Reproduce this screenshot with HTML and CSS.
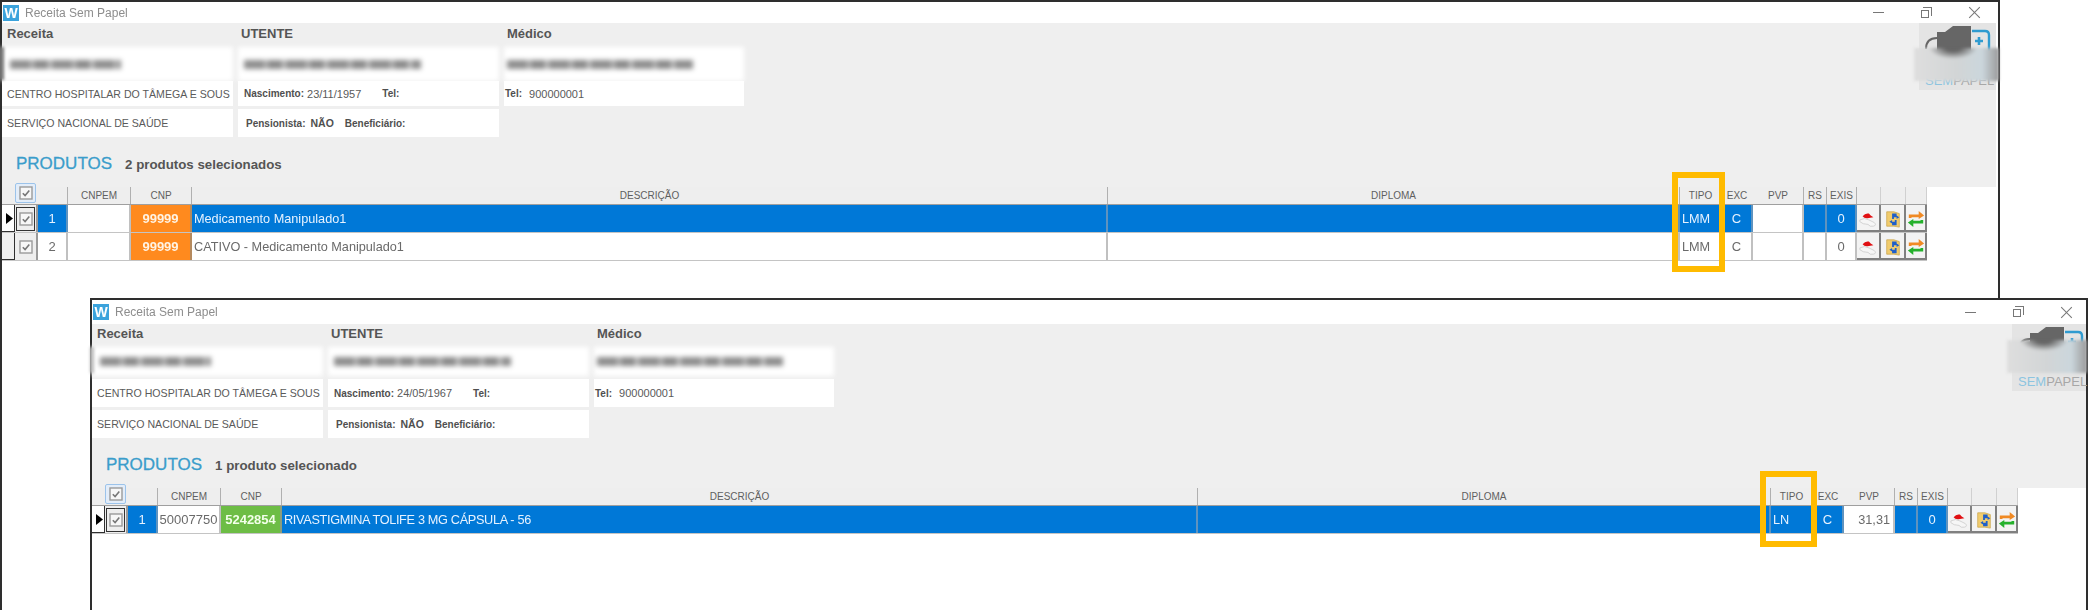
FILE: index.html
```html
<!DOCTYPE html>
<html lang="pt">
<head>
<meta charset="utf-8">
<title>Receita Sem Papel</title>
<link rel="stylesheet" href="styles.css">
</head>
<body>
<svg class="defs" aria-hidden="true">
  <symbol id="i-check" viewBox="0 0 14 14">
    <rect x="1" y="1" width="12" height="12" fill="#f7f7f7" stroke="#9a9a9a" stroke-width="1.4"/>
    <path d="M3.8 7.2l2.3 2.4 4.2-5" fill="none" stroke="#777" stroke-width="1.6"/>
  </symbol>
  <symbol id="i-arrow" viewBox="0 0 7 11"><path d="M0 0l7 5.5L0 11z" fill="#000"/></symbol>
  <symbol id="i-cap" viewBox="0 0 20 20">
    <path d="M1 11q5-3 10 0l6 3q3 3-1 4-4 1-6-2-6 0-9-3z" fill="#f6f6f6" stroke="#cfcfcf"/>
    <path d="M4 7q3-4 7-3l2 2 3 2-5 1q-5 1-7-2z" fill="#e00f12"/>
  </symbol>
  <symbol id="i-folder" viewBox="0 0 20 20">
    <path d="M3 2h8l6 2v15l-6-1H3z" fill="#f1cc6d" stroke="#c9a44a" stroke-width=".8"/>
    <path d="M9 4h5v2l3 2-3 2V8h-3v2H9zM13 17H9v-2l-3-2 3-2v2h3v-2h2v6z" fill="#1f5fc9"/>
  </symbol>
  <symbol id="i-swap" viewBox="0 0 20 20">
    <path d="M2 9V5h11V1l6 5-6 4V8H5v1z" fill="#f08a24"/>
    <path d="M18 11v4H7v4l-6-5 6-4v2h8v-1z" fill="#25b12c"/>
  </symbol>
  <symbol id="i-logo" viewBox="0 0 77 46">
    <path d="M7 26c0-7 4-11 11-11" fill="none" stroke="#666" stroke-width="2"/>
    <path d="M18 9h8l8-6h18v28H18z" fill="#666"/>
    <path d="M53 8h13q4 0 4 4v20" fill="none" stroke="#2f9bd0" stroke-width="2.4"/>
    <path d="M60 14v8M56 18h8" stroke="#2f9bd0" stroke-width="2.6"/>
  </symbol>
</svg>

<main class="desktop">
  <section class="window window--back">
    <header class="titlebar">
      <span class="app-icon">W</span>
      <span class="app-title">Receita Sem Papel</span>
      <div class="controls">
        <span class="control"><span class="ctl-min"></span></span>
        <span class="control"><span class="ctl-restore"></span></span>
        <span class="control"><span class="ctl-close"></span></span>
      </div>
    </header>

    <div class="panel">
      <div class="info">
        <div class="info-grid">
          <h2 class="heading">Receita</h2>
          <h2 class="heading">UTENTE</h2>
          <h2 class="heading">Médico</h2>
          <div class="card card--blurred"><span class="redact redact--a"></span></div>
          <div class="card card--blurred"><span class="redact redact--b"></span></div>
          <div class="card card--blurred"><span class="redact redact--c"></span></div>
          <div class="card card--r2 card--plain">CENTRO HOSPITALAR DO TÂMEGA E SOUS</div>
          <div class="card card--r2 card--mid"><b>Nascimento:</b><span class="val">23/11/1957</span><b class="after-date">Tel:</b></div>
          <div class="card card--r2 card--tight"><b>Tel:</b><span class="val val--wide">900000001</span></div>
          <div class="card card--r3 card--plain">SERVIÇO NACIONAL DE SAÚDE</div>
          <div class="card card--r3 card--mid2"><b>Pensionista:</b><b class="flag">NÃO</b><b class="after-flag">Beneficiário:</b></div>
        </div>
        <div class="products-head">
          <span class="products-title">PRODUTOS</span>
          <span class="products-count">2 produtos selecionados</span>
        </div>
      </div>
      <div class="logo">
        <svg class="logo-mark" aria-hidden="true"><use href="#i-logo"/></svg>
        <span class="logo-text"><span class="logo-sem">SEM</span>PAPEL</span>
        <span class="logo-blur"></span>
      </div>
    </div>
    <span class="smear"></span>

    <div class="table">
      <div class="tr tr--head">
        <span class="th th--plain"></span>
        <span class="th th--plain th--check"><span class="head-check"><svg class="check"><use href="#i-check"/></svg></span></span>
        <span class="th"></span><span class="th">CNPEM</span><span class="th">CNP</span><span class="th">DESCRIÇÃO</span><span class="th">DIPLOMA</span><span class="th">TIPO</span><span class="th th--plain">EXC</span><span class="th">PVP</span><span class="th">RS</span><span class="th">EXIS</span><span class="th"></span><span class="th"></span><span class="th"></span>
      </div>
      <div class="tr tr--selected">
        <span class="td td--pointer"><svg class="pointer"><use href="#i-arrow"/></svg></span>
        <span class="td td--check td--focus"><span class="focus"><svg class="check"><use href="#i-check"/></svg></span></span>
        <span class="td td--c">1</span>
        <span class="td td--white td--c"></span>
        <span class="td td--orange td--c">99999</span>
        <span class="td">Medicamento Manipulado1</span>
        <span class="td"></span>
        <span class="td">LMM</span>
        <span class="td td--c">C</span>
        <span class="td td--white"></span>
        <span class="td"></span>
        <span class="td td--c">0</span>
        <span class="td td--btn"><svg class="btn-icon"><use href="#i-cap"/></svg></span>
        <span class="td td--btn"><svg class="btn-icon"><use href="#i-folder"/></svg></span>
        <span class="td td--btn"><svg class="btn-icon"><use href="#i-swap"/></svg></span>
      </div>
      <div class="tr">
        <span class="td td--pointer"></span>
        <span class="td td--check"><svg class="check"><use href="#i-check"/></svg></span>
        <span class="td td--c">2</span>
        <span class="td td--c"></span>
        <span class="td td--orange td--c">99999</span>
        <span class="td">CATIVO - Medicamento Manipulado1</span>
        <span class="td"></span>
        <span class="td">LMM</span>
        <span class="td td--c">C</span>
        <span class="td"></span>
        <span class="td"></span>
        <span class="td td--c">0</span>
        <span class="td td--btn"><svg class="btn-icon"><use href="#i-cap"/></svg></span>
        <span class="td td--btn"><svg class="btn-icon"><use href="#i-folder"/></svg></span>
        <span class="td td--btn"><svg class="btn-icon"><use href="#i-swap"/></svg></span>
      </div>
    </div>
    <span class="highlight"></span>
  </section>

  <section class="window window--front">
    <header class="titlebar">
      <span class="app-icon">W</span>
      <span class="app-title">Receita Sem Papel</span>
      <div class="controls">
        <span class="control"><span class="ctl-min"></span></span>
        <span class="control"><span class="ctl-restore"></span></span>
        <span class="control"><span class="ctl-close"></span></span>
      </div>
    </header>

    <div class="panel">
      <div class="info">
        <div class="info-grid">
          <h2 class="heading">Receita</h2>
          <h2 class="heading">UTENTE</h2>
          <h2 class="heading">Médico</h2>
          <div class="card card--blurred"><span class="redact redact--a"></span></div>
          <div class="card card--blurred"><span class="redact redact--b"></span></div>
          <div class="card card--blurred"><span class="redact redact--c"></span></div>
          <div class="card card--r2 card--plain">CENTRO HOSPITALAR DO TÂMEGA E SOUS</div>
          <div class="card card--r2 card--mid"><b>Nascimento:</b><span class="val">24/05/1967</span><b class="after-date">Tel:</b></div>
          <div class="card card--r2 card--tight"><b>Tel:</b><span class="val val--wide">900000001</span></div>
          <div class="card card--r3 card--plain">SERVIÇO NACIONAL DE SAÚDE</div>
          <div class="card card--r3 card--mid2"><b>Pensionista:</b><b class="flag">NÃO</b><b class="after-flag">Beneficiário:</b></div>
        </div>
        <div class="products-head">
          <span class="products-title">PRODUTOS</span>
          <span class="products-count">1 produto selecionado</span>
        </div>
      </div>
      <div class="logo">
        <svg class="logo-mark" aria-hidden="true"><use href="#i-logo"/></svg>
        <span class="logo-text"><span class="logo-sem">SEM</span>PAPEL</span>
        <span class="logo-blur"></span>
      </div>
    </div>
    <span class="smear"></span>

    <div class="table">
      <div class="tr tr--head">
        <span class="th th--plain"></span>
        <span class="th th--plain th--check"><span class="head-check"><svg class="check"><use href="#i-check"/></svg></span></span>
        <span class="th"></span><span class="th">CNPEM</span><span class="th">CNP</span><span class="th">DESCRIÇÃO</span><span class="th">DIPLOMA</span><span class="th">TIPO</span><span class="th th--plain">EXC</span><span class="th">PVP</span><span class="th">RS</span><span class="th">EXIS</span><span class="th"></span><span class="th"></span><span class="th"></span>
      </div>
      <div class="tr tr--selected">
        <span class="td td--pointer"><svg class="pointer"><use href="#i-arrow"/></svg></span>
        <span class="td td--check td--focus"><span class="focus"><svg class="check"><use href="#i-check"/></svg></span></span>
        <span class="td td--c">1</span>
        <span class="td td--white td--c">50007750</span>
        <span class="td td--green td--c">5242854</span>
        <span class="td td--caps">RIVASTIGMINA TOLIFE 3 MG CÁPSULA - 56</span>
        <span class="td"></span>
        <span class="td">LN</span>
        <span class="td td--c">C</span>
        <span class="td td--white td--r">31,31</span>
        <span class="td"></span>
        <span class="td td--c">0</span>
        <span class="td td--btn"><svg class="btn-icon"><use href="#i-cap"/></svg></span>
        <span class="td td--btn"><svg class="btn-icon"><use href="#i-folder"/></svg></span>
        <span class="td td--btn"><svg class="btn-icon"><use href="#i-swap"/></svg></span>
      </div>
    </div>
    <span class="highlight"></span>
  </section>
</main>
</body>
</html>
```

FILE: styles.css
```css
* { box-sizing: border-box; }

html, body {
  margin: 0;
  height: 100%;
  overflow: hidden;
  background: #fff;
}

body {
  font-family: "Liberation Sans", Arial, sans-serif;
  color: #5c5c5c;
}

.defs {
  position: absolute;
  width: 0;
  height: 0;
}

.desktop {
  position: relative;
  width: 2088px;
  height: 610px;
  overflow: hidden;
}

/* Windows sit on a free canvas: their place is the content. */
.window {
  position: absolute;
  display: flex;
  flex-direction: column;
  background: #fff;
  border: 2px solid #2e2e2e;
  border-bottom: 0;
}

.window--back {
  left: 0;
  top: 0;
  width: 2000px;
  height: 610px;
  --title-h: 21px;
  --blur-h: 34px;
  --head-row: 24px;
  --r2-h: 25px;
  --r2-gap: 0px;
  --dip: 572px;
  --panel-right: 2px;
  --ctl-right: 0px;
  --logo-w: 77px;
  --logo-blur-top: 25px;
  --logo-blur-w: 85px;
  --hl-left: 1670px;
  --hl-top: 170px;
  --hl-w: 53px;
  --hl-h: 100px;
  --smear-top: 45px;
  --smear-h: 33px;
  --smear-color: #777;
}

.window--front {
  left: 90px;
  top: 298px;
  width: 1998px;
  height: 312px;
  --title-h: 24px;
  --blur-h: 29px;
  --head-row: 23px;
  --r2-h: 28px;
  --r2-gap: 3px;
  --dip: 573px;
  --panel-right: 0px;
  --ctl-right: -4px;
  --logo-w: 74px;
  --logo-blur-top: 16px;
  --logo-blur-w: 80px;
  --hl-left: 1668px;
  --hl-top: 171px;
  --hl-w: 57px;
  --hl-h: 76px;
  --smear-top: 47px;
  --smear-h: 26px;
  --smear-color: #bdbdbd;
}

/* Title bar */
.titlebar {
  flex: none;
  display: flex;
  align-items: center;
  height: var(--title-h);
  padding-left: 1px;
  filter: blur(.35px);
}

.app-icon {
  flex: none;
  width: 16px;
  height: 16px;
  background: #3ba3dc;
  color: #fff;
  font-size: 14px;
  font-weight: 700;
  line-height: 16px;
  text-align: center;
}

.app-title {
  margin-left: 6px;
  font-size: 12px;
  color: #8d8d8d;
}

.controls {
  display: flex;
  margin-left: auto;
  margin-right: var(--ctl-right);
}

.control {
  display: flex;
  align-items: center;
  justify-content: center;
  width: 48px;
  height: 18px;
}

.ctl-min {
  width: 11px;
  height: 1px;
  background: #777;
}

.ctl-restore {
  position: relative;
  width: 8px;
  height: 8px;
  margin: 2px 0 0 -2px;
  border: 1px solid #777;
}

.ctl-restore::before {
  content: "";
  position: absolute;
  left: 1px;
  top: -4px;
  width: 8px;
  height: 8px;
  border: 1px solid #777;
  border-left: 0;
  border-bottom: 0;
}

.ctl-close {
  position: relative;
  width: 13px;
  height: 13px;
}

.ctl-close::before,
.ctl-close::after {
  content: "";
  position: absolute;
  left: 6px;
  top: -1px;
  width: 1px;
  height: 15px;
  background: #777;
  transform: rotate(45deg);
}

.ctl-close::after { transform: rotate(-45deg); }

/* Grey header panel */
.panel {
  flex: none;
  display: flex;
  justify-content: space-between;
  height: 164px;
  margin-right: var(--panel-right);
  background: #efefef;
}

.info {
  display: flex;
  flex-direction: column;
}

.info-grid {
  display: grid;
  grid-template-columns: 231px 261px 240px;
  grid-template-rows: var(--head-row) var(--blur-h) calc(var(--r2-h) + var(--r2-gap)) 31px;
  column-gap: 5px;
}

.heading {
  margin: 0;
  padding: 0 0 4px 5px;
  align-self: center;
  font-size: 13px;
  font-weight: 700;
  color: #555;
}

.heading:nth-child(2) { padding-left: 3px; }
.heading:nth-child(3) { padding-left: 3px; }

.card {
  display: flex;
  align-items: center;
  padding-left: 5px;
  background: #fff;
  font-size: 11px;
  color: #5a5a5a;
  white-space: nowrap;
}

.card--plain { font-size: 10.6px; }
.card--r2 { margin-top: var(--r2-gap); }
.card--r3 { margin-top: 3px; }
.card--mid { padding-left: 6px; }
.card--mid2 { padding-left: 8px; }
.card--tight { padding-left: 1px; }
.card--blurred { filter: blur(2.5px); padding-left: 6px; }

.card b { font-size: 10px; color: #4f4f4f; }

.val { margin-left: 3px; }
.val--wide { margin-left: 7px; }
.after-date { margin-left: 21px; }
.card .flag { margin-left: 5px; font-size: 10.5px; }
.after-flag { margin-left: 11px; }

.redact {
  display: block;
  height: 9px;
  background: repeating-linear-gradient(90deg, #8e8e8e 0 20px, #b5b5b5 20px 24px, #8a8a8a 24px 38px, #c2c2c2 38px 42px);
}

.redact--a { width: 111px; margin-left: 2px; }
.redact--b { width: 177px; }
.redact--c { width: 186px; margin-left: -3px; }

.products-head {
  flex: 1;
  display: flex;
  align-items: center;
  padding-left: 14px;
  padding-top: 4px;
}

.products-title {
  font-size: 17px;
  color: #3a9dcb;
  font-weight: 400;
  -webkit-text-stroke: .3px #3a9dcb;
}

.products-count {
  margin-left: 13px;
  font-size: 13.3px;
  font-weight: 700;
  color: #555;
}

/* Logo */
.logo {
  position: relative;
  flex: none;
  width: var(--logo-w);
  height: 67px;
  background: #e4e4e4;
}

.logo-mark {
  display: block;
  width: 77px;
  height: 46px;
}

.logo-text {
  position: absolute;
  left: 6px;
  top: 50px;
  font-size: 13px;
  line-height: 15px;
  color: #a7a7a7;
  white-space: nowrap;
}

.logo-sem { color: #8cc4e0; }

.logo-blur {
  position: absolute;
  left: -5px;
  top: var(--logo-blur-top);
  width: var(--logo-blur-w);
  height: 33px;
  background:
    radial-gradient(ellipse 24px 11px at 46% 0, #666 30%, transparent 100%),
    linear-gradient(90deg, #dedede, #d2d5d6 50%, #cbd6dc 80%, #9a9a9a 100%);
  filter: blur(1.5px);
}

.smear {
  position: absolute;
  left: -2px;
  top: var(--smear-top);
  width: 4px;
  height: var(--smear-h);
  background: var(--smear-color);
  filter: blur(1.5px);
}

/* Product grid */
.table {
  flex: none;
  filter: blur(.3px);
}

.tr {
  display: grid;
  grid-template-columns: 13px 23px 30px 63px 61px 916px var(--dip) 42px 31px 51px 23px 30px 24px 25px 21px;
  width: max-content;
  height: 28px;
  border-bottom: 1px solid #c4c4c4;
}

.tr--head {
  height: 18px;
  border-bottom: 1px solid #9f9f9f;
}

.th {
  display: flex;
  align-items: center;
  justify-content: center;
  background: #eeeeee;
  border-right: 1px solid #b0b0b0;
  font-size: 10px;
  color: #5f5f5f;
}

.th--plain { border-right-color: transparent; }
.th--check { justify-content: flex-start; }
.th:nth-child(n+13) { border-right-color: #d0d0d0; }

.head-check {
  display: flex;
  align-items: center;
  justify-content: center;
  flex: none;
  width: 21px;
  height: 20px;
  margin-top: -6px;
  background: #e3edf9;
  border: 1px solid #9cc3ea;
  border-radius: 2px;
}

.td {
  display: flex;
  align-items: center;
  padding-left: 2px;
  background: #fff;
  border-right: 2px solid #c0c0c0;
  font-size: 12.7px;
  color: #6a6a6a;
  white-space: nowrap;
  overflow: hidden;
}

.td--c { justify-content: center; padding-left: 0; font-size: 13px; }
.td--r { justify-content: flex-end; padding-right: 3px; }
.td--caps { letter-spacing: -.32px; }

.tr--selected .td {
  background: #0078d7;
  color: #e6f2ff;
  border-right-color: #5f93bf;
}

.tr--selected .td--white {
  background: #fff;
  color: #6a6a6a;
  border-right-color: #c0c0c0;
}

.tr .td--orange,
.tr--selected .td--orange {
  background: #ff8a1e;
  color: #fff3e4;
  font-weight: 700;
  border-right-color: #b58a5e;
}

.tr--selected .td--green {
  background: #6dbd45;
  color: #f2ffe9;
  font-weight: 700;
  border-right-color: #8a9c7c;
}

.tr .td--pointer,
.tr--selected .td--pointer {
  padding-left: 4px;
  background: #f0f0f0;
  border: 1px solid #303030;
  border-left: 0;
  border-top-width: 0;
  border-bottom-width: 1px;
}

.tr--selected .td--pointer { background: #fff; }

.pointer {
  width: 7px;
  height: 11px;
}

.tr .td--check,
.tr--selected .td--check {
  justify-content: center;
  padding-left: 0;
  background: #eeeeee;
  border-right: 2px solid #9a9a9a;
}

.tr .td--btn,
.tr--selected .td--btn {
  justify-content: center;
  padding-left: 0;
  background: #f3f3f3;
  border-right: 2px solid #808080;
  box-shadow: inset 0 -2px 0 #808080;
}

.focus {
  display: flex;
  align-items: center;
  justify-content: center;
  width: 19px;
  height: 24px;
  border: 1px solid #333;
}

.check {
  display: block;
  width: 14px;
  height: 14px;
}

.btn-icon {
  width: 18px;
  height: 18px;
}

/* Yellow call-out drawn over the TIPO column */
.highlight {
  position: absolute;
  left: var(--hl-left);
  top: var(--hl-top);
  width: var(--hl-w);
  height: var(--hl-h);
  border: 6px solid #ffbb00;
}
```
